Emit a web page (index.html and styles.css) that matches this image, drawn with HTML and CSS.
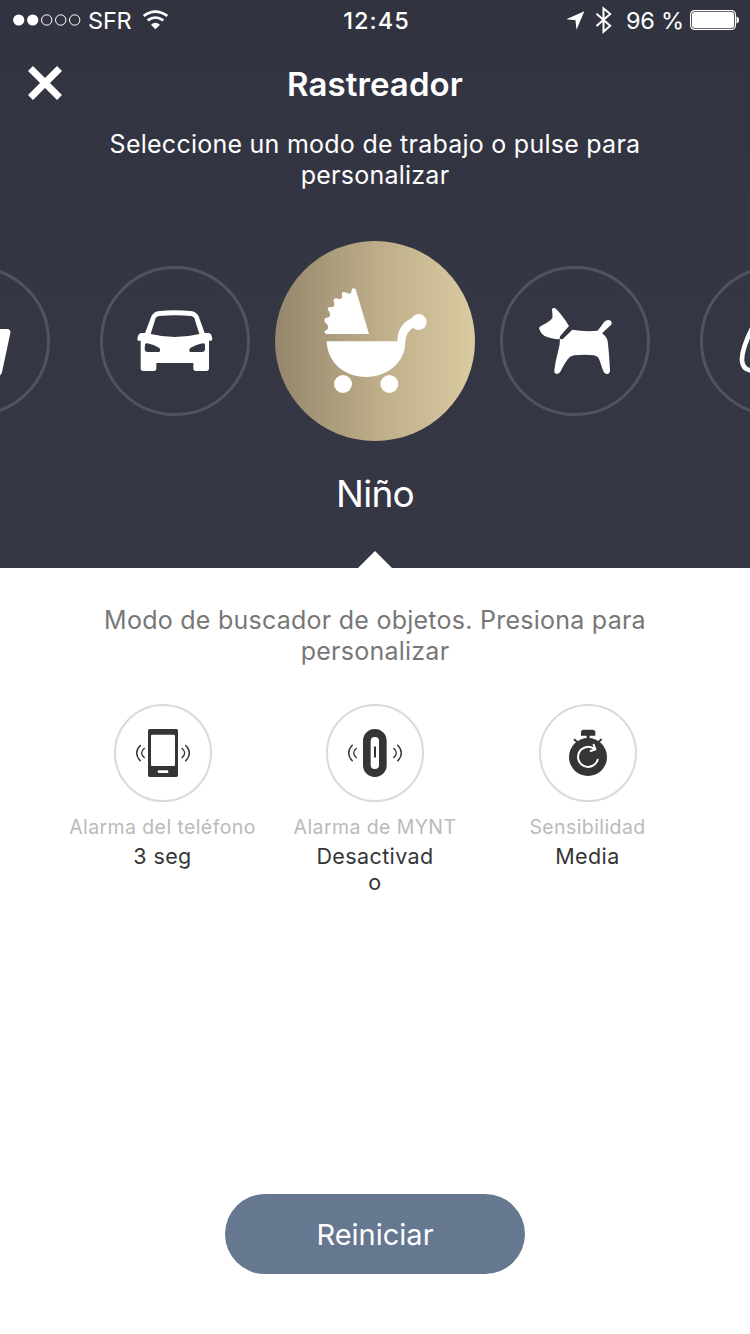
FILE: index.html
```html
<!DOCTYPE html>
<html lang="es">
<head>
<meta charset="utf-8">
<title>Rastreador</title>
<link rel="stylesheet" href="styles.css">
</head>
<body>
<main class="screen">
  <section class="hero">
    <header class="status">
      <div class="status-side">
        <svg class="signal" viewBox="0 0 68 12"><g fill="#fff"><circle cx="5.7" cy="6" r="5.6"/><circle cx="19.7" cy="6" r="5.6"/></g><g fill="none" stroke="#fff" stroke-width="1"><circle cx="33.7" cy="6" r="5.2"/><circle cx="47.7" cy="6" r="5.2"/><circle cx="61.7" cy="6" r="5.2"/></g></svg>
        <span class="carrier">SFR</span>
        <svg class="wifi" viewBox="432 30 75 60"><g fill="none" stroke="#fff" stroke-width="8"><path d="M434 48Q469 22 505 48"/><path d="M446 61Q469 44 493 61"/></g><path d="M456 74Q469 63 483 74L469 88Z" fill="#fff"/></svg>
      </div>
      <span class="clock">12:45</span>
      <div class="status-side status-right">
        <svg class="location" viewBox="54 34 56 58"><path d="M109 35L85 91L82 62L54 59Z" fill="#fff"/></svg>
        <svg class="bluetooth" viewBox="142 20 50 84"><path d="M146 43L187 79L167 97V27L187 44L146 80" fill="none" stroke="#fff" stroke-width="6"/></svg>
        <span class="percent">96 %</span>
        <svg class="battery" viewBox="0 0 50 20"><rect x=".6" y=".6" width="44.8" height="18.8" rx="4" fill="none" stroke="#fff" stroke-width="1.2"/><rect x="2" y="2" width="42" height="16" rx="2.5" fill="#fff"/><path d="M46.5 6.5Q49 7 49 10T46.5 13.5Z" fill="#fff"/></svg>
      </div>
    </header>
    <div class="nav">
      <svg class="close" viewBox="0 0 36 36"><path d="M3.5 3.5L32.5 32.5M32.5 3.5L3.5 32.5" stroke="#fff" stroke-width="7"/></svg>
      <h1 class="title">Rastreador</h1>
      <span class="nav-end"></span>
    </div>
    <p class="intro">Seleccione un modo de trabajo o pulse para<br>personalizar</p>
    <div class="carousel">
      <div class="slot"><svg class="mode" viewBox="-300 18 450 450"><circle class="ring" cx="-75" cy="243" r="220.5"/><path d="M-60 207H22Q33 208 31 219L6 337Q4 347-6 348H-60Z" fill="#fff"/></svg></div>
      <div class="slot"><svg class="mode" viewBox="300 18 450 450"><circle class="ring" cx="525" cy="243" r="220.5"/>
        <path fill="#fff" fill-rule="evenodd" d="M435 219L453 172Q458 158 473 154Q525 147 577 154Q592 158 597 172L614 219H626Q635 219 637 238Q637 242 633 242H627V325Q627 333 619 333H588Q580 333 580 325V309H469V325Q469 333 461 333H430Q422 333 422 325V242H416Q411 242 412 238Q414 219 424 219ZM467 174L452 222Q489 231 525 231T598 222L583 174Q580 169 573 168Q525 163 477 168Q470 169 467 174ZM435 254Q435 250 442 250Q462 254 477 263Q483 269 478 276H443Q435 276 434 267ZM615 254Q615 250 608 250Q588 254 572 263Q565 269 570 276H606Q615 276 615 267Z"/></svg></div>
      <div class="slot"><svg class="mode-active" viewBox="15 18 600 600">
        <defs><linearGradient id="gold"><stop offset="0" stop-color="#94866c"/><stop offset=".5" stop-color="#bcac88"/><stop offset="1" stop-color="#dacba2"/></linearGradient></defs>
        <circle cx="315" cy="318" r="300" fill="url(#gold)"/>
        <g fill="#fff"><path d="M297 297H168Q162 294 164 288Q177 284 174 273Q170 264 164 261Q162 251 167 249Q182 247 180 236Q179 228 173 225Q173 216 179 216Q193 217 193 210Q193 203 190 196Q192 190 198 190Q211 195 216 189L216 173Q221 169 226 172Q239 179 243 174L246 161Q252 157 257 163Z"/><path d="M170 319H382Q382 269 425 250A24 24 0 1 1 429 278Q407 292 406 322C405 384 351 426 288 426S172 384 170 319Z"/><circle cx="219" cy="447" r="27"/><circle cx="358" cy="447" r="27"/></g></svg></div>
      <div class="slot"><svg class="mode" viewBox="30 18 450 450"><circle class="ring" cx="255" cy="243" r="220.5"/>
        <g fill="#fff"><path d="M186 148Q188 142 196 145Q216 164 237 198L210 229L209 238Q183 237 164 228Q151 220 147 204Q149 199 158 195Q180 185 187 174Q188 168 186 148Z"/><path d="M210 237L218 238L247 209Q285 216 323 212Q332 201 342 186Q352 177 362 182Q368 188 362 196L336 220Q350 229 353 244Q357 274 360 332Q359 342 350 342Q343 342 340 334Q333 313 329 302Q325 289 312 286Q285 282 253 286Q240 288 233 298Q220 316 211 335Q207 342 199 342Q192 341 193 330Q197 300 204 275Q210 254 210 237Z"/></g></svg></div>
      <div class="slot"><svg class="mode" viewBox="630 18 450 450"><circle class="ring" cx="855" cy="243" r="220.5"/><path d="M794 190Q754 266 756 302Q758 330 786 332" fill="none" stroke="#fff" stroke-width="14"/></svg></div>
    </div>
    <h2 class="mode-name">Niño</h2>
    <div class="pointer"></div>
  </section>
  <section class="details">
    <p class="hint">Modo de buscador de objetos. Presiona para<br>personalizar</p>
    <div class="settings">
      <div class="setting">
        <svg class="setting-icon" viewBox="42 27 294 294"><circle class="thin-ring" cx="189" cy="174" r="144"/><rect x="144" y="102" width="90" height="144" rx="5" fill="#353535"/><rect x="153" y="119" width="72" height="94" rx="4" fill="#fff"/><rect x="173" y="226" width="32" height="8" rx="3" fill="#fff"/><path class="wave" d="M122 150Q98 174 122 199M134 159Q116 174 134 189M256 150Q280 174 256 199M245 159Q263 174 245 189"/></svg>
        <span class="setting-label">Alarma del teléfono</span><span class="setting-value">3 seg</span>
      </div>
      <div class="setting">
        <svg class="setting-icon" viewBox="33 27 294 294"><circle class="thin-ring" cx="180" cy="174" r="144"/><rect x="144" y="102" width="71" height="144" rx="35" fill="#353535"/><rect x="167" y="126" width="25" height="96" rx="12" fill="#fff"/><path d="M180 157V185" stroke="#353535" stroke-width="6" stroke-linecap="round"/><path class="wave" d="M113 149Q89 174 113 199M125 159Q107 174 125 189M247 149Q271 174 247 199M235 159Q253 174 235 189"/></svg>
        <span class="setting-label">Alarma de MYNT</span><span class="setting-value">Desactivad<br>o</span>
      </div>
      <div class="setting">
        <svg class="setting-icon" viewBox="27 27 294 294"><circle class="thin-ring" cx="174" cy="174" r="144"/><g fill="#353535"><circle cx="174" cy="186" r="57"/><path d="M153 122V110Q153 104 161 104H187Q195 104 196 110V122H179V134H170V122Z"/></g><path d="M134 134L145 144M213 134L202 144" stroke="#353535" stroke-width="6" stroke-linecap="round"/><path d="M203 194A30 30 0 1 1 195 164M191 149L196 163L182 168" fill="none" stroke="#fff" stroke-width="6" stroke-linecap="round"/></svg>
        <span class="setting-label">Sensibilidad</span><span class="setting-value">Media</span>
      </div>
    </div>
    <button class="reset">Reiniciar</button>
  </section>
</main>
</body>
</html>
```
FILE: styles.css
```css
* { box-sizing: border-box; }
body { margin: 0; font-family: Inter, "Liberation Sans", sans-serif; }
h1, h2, p { margin: 0; font-weight: 400; }
svg { display: block; flex: none; }
.screen { width: 750px; height: 1334px; display: flex; flex-direction: column; overflow: hidden; background: #fff; }
.hero { height: 568px; display: flex; flex-direction: column; align-items: center; color: #fff; background: linear-gradient(#323340, #343643 50%, #353744); }
.status { width: 750px; height: 40px; display: grid; grid-template-columns: 1fr auto 1fr; align-items: center; padding: 0 10px 0 13px; font-size: 23.5px; }
.status-side { display: flex; align-items: center; }
.status-right { justify-content: flex-end; }
.signal { width: 68px; height: 12px; }
.carrier { margin-left: 7px; letter-spacing: -.2px; }
.wifi { width: 25px; height: 20px; margin-left: 12px; }
.clock { font-weight: 500; letter-spacing: 1px; }
.location { width: 19px; height: 19px; }
.bluetooth { width: 17px; height: 28px; margin-left: 10px; }
.percent { margin: 0 6px 0 14px; letter-spacing: -.2px; }
.battery { width: 50px; height: 20px; }
.nav { width: 750px; height: 88px; display: grid; grid-template-columns: 1fr auto 1fr; align-items: center; padding: 0 27px; }
.close { width: 36px; height: 36px; margin-bottom: 3px; }
.title { font-size: 33px; font-weight: 600; letter-spacing: .1px; }
.intro, .hint { font-size: 25px; line-height: 31px; text-align: center; letter-spacing: .25px; }
.intro { margin-top: 1px; }
.carousel { width: 750px; height: 200px; margin-top: 50px; display: flex; justify-content: center; overflow: hidden; }
.slot { flex: 0 0 200px; display: flex; align-items: center; justify-content: center; }
.mode { width: 150px; height: 150px; }
.mode-active { width: 200px; height: 200px; }
.ring { fill: none; stroke: #52535f; stroke-width: 9; }
.mode-name { margin-top: 30px; font-size: 37px; line-height: 46px; letter-spacing: -.7px; }
.pointer { width: 34px; height: 17px; margin-top: auto; background: #fff; clip-path: polygon(50% 0, 100% 100%, 0 100%); }
.details { flex: 1; display: flex; flex-direction: column; align-items: center; padding: 37px 0 60px; }
.hint { color: #777; }
.settings { display: grid; grid-template-columns: repeat(3, 212.5px); margin-top: 37px; }
.setting { display: flex; flex-direction: column; align-items: center; text-align: center; }
.setting-icon { width: 98px; height: 98px; }
.thin-ring { fill: none; stroke: #dadada; stroke-width: 6; }
.wave { fill: none; stroke: #353535; stroke-width: 4; }
.setting-label { margin-top: 13px; font-size: 19.5px; line-height: 25px; letter-spacing: .4px; color: #bababa; }
.setting-value { margin-top: 3px; font-size: 21.5px; line-height: 26px; letter-spacing: .4px; color: #353535; }
.reset { width: 300px; height: 80px; margin-top: auto; border: 0; border-radius: 40px; background: #667790; color: #fff; font: 400 29px Inter, "Liberation Sans", sans-serif; }
```
